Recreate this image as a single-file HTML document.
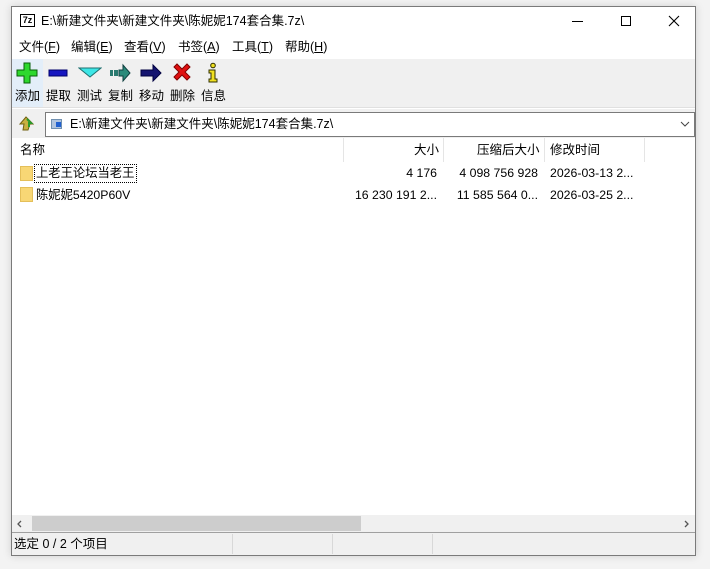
<!DOCTYPE html>
<html><head><meta charset="utf-8"><style>
*{margin:0;padding:0;box-sizing:border-box}
body{width:710px;height:569px;background:#f3f3f3;font-family:"Liberation Sans","Noto Sans CJK SC",sans-serif;font-size:12.5px;line-height:15px;color:#000;position:relative;overflow:hidden}
.win{position:absolute;left:11px;top:6px;width:685px;height:550px;background:#fff;border:1px solid #7a7a7a;box-shadow:0 0 8px rgba(0,0,0,.15)}
.a{position:absolute;white-space:nowrap}
.tb{position:absolute;left:0;top:52px;width:683px;height:49px;background:#f0f0f0;border-bottom:1px solid #e0e0e0}
.btn{position:absolute;top:0;width:31px;height:48px;text-align:center}
.btn svg{position:absolute;left:4px;top:3px}
.btn span{position:absolute;left:0;right:0;top:30px;font-size:12.5px}
.hdr{position:absolute;top:131px;height:24px;left:0;width:683px;background:#fff}
.sep{position:absolute;top:0;width:1px;height:24px;background:#e5e5e5}
.n{font-size:12.3px}
</style></head><body>
<div class="win">
 <div class="a" style="left:8px;top:7px;width:15px;height:13px;border:1px solid #000;font-size:9px;font-weight:bold;line-height:11px;text-align:center;background:#fff">7z</div>
 <div class="a" style="left:29px;top:7px">E:\新建文件夹\新建文件夹\陈妮妮174套合集.7z\</div>
 <div class="a" style="left:560px;top:14px;width:11px;height:1px;background:#000"></div>
 <div class="a" style="left:609px;top:9px;width:10px;height:10px;border:1px solid #000"></div>
 <svg class="a" style="left:656px;top:8px" width="12" height="12"><path d="M1 1L11 11M11 1L1 11" stroke="#000" stroke-width="1.1"/></svg>
 <div class="a" style="left:7px;top:33px">文件(<u>F</u>)</div>
 <div class="a" style="left:59px;top:33px">编辑(<u>E</u>)</div>
 <div class="a" style="left:112px;top:33px">查看(<u>V</u>)</div>
 <div class="a" style="left:166px;top:33px">书签(<u>A</u>)</div>
 <div class="a" style="left:220px;top:33px">工具(<u>T</u>)</div>
 <div class="a" style="left:273px;top:33px">帮助(<u>H</u>)</div>
 <div class="tb">
  <div class="btn" style="left:0;background:#e3eef9">
   <svg width="22" height="22"><path d="M8 1h6v7h7v6h-7v7H8v-7H1V8h7z" fill="#2ed82e" stroke="#0a600a" stroke-width="1"/></svg><span>添加</span></div>
  <div class="btn" style="left:31px">
   <svg width="22" height="22"><rect x="2" y="8" width="18" height="6" fill="#1616c0" stroke="#00006a"/></svg><span>提取</span></div>
  <div class="btn" style="left:62px">
   <svg width="24" height="22"><path d="M1 6h22l-11 9z" fill="#3de6e6" stroke="#207070"/></svg><span>测试</span></div>
  <div class="btn" style="left:93px">
   <svg width="22" height="22"><rect x="1" y="8" width="3" height="6" fill="#2a7a70"/><rect x="5" y="8" width="4" height="6" fill="#2a7a70"/><path d="M10 8h4V3l7 8-7 8v-5h-4z" fill="#2a8a7a" stroke="#104040"/></svg><span>复制</span></div>
  <div class="btn" style="left:124px">
   <svg width="22" height="22"><path d="M1 8h12V3l8 8-8 8v-5H1z" fill="#141470" stroke="#000040"/></svg><span>移动</span></div>
  <div class="btn" style="left:155px">
   <svg width="22" height="22"><path d="M3 5l3-3 5 5 5-5 3 3-5 5 5 5-3 3-5-5-5 5-3-3 5-5z" fill="#e01010" stroke="#800000"/></svg><span>删除</span></div>
  <div class="btn" style="left:186px">
   <svg width="22" height="22"><circle cx="11" cy="3.5" r="2.3" fill="#f0e020" stroke="#303000"/><path d="M7 8h6v9h2v3H7v-3h2v-6H7z" fill="#f0e020" stroke="#303000"/></svg><span>信息</span></div>
 </div>
 <div class="a" style="left:0;top:102px;width:683px;height:29px;background:#f0f0f0"></div>
 <svg class="a" style="left:6px;top:108px" width="16" height="16"><path d="M2 9h4l-1 6h5l2-6h3L8 2z" fill="#c8b040" stroke="#706010"/><path d="M9 4l4 4h-2v4" fill="none" stroke="#2a9a2a" stroke-width="2"/></svg>
 <div class="a" style="left:33px;top:105px;width:650px;height:25px;background:#fff;border:1px solid #7a7a7a"></div>
 <div class="a" style="left:39px;top:112px;width:11px;height:10px;background:#b0c4de;border:1px solid #7090b0"><div style="position:absolute;left:4px;top:2px;width:5px;height:5px;background:#2060d0"></div></div>
 <div class="a" style="left:58px;top:110px">E:\新建文件夹\新建文件夹\陈妮妮174套合集.7z\</div>
 <svg class="a" style="left:668px;top:113px" width="10" height="8"><path d="M1 2l4 4 4-4" fill="none" stroke="#444"/></svg>
 <div class="hdr">
  <div class="a" style="left:8px;top:5px">名称</div>
  <div class="sep" style="left:331px"></div>
  <div class="a" style="left:402px;top:5px">大小</div>
  <div class="sep" style="left:431px"></div>
  <div class="a" style="left:465px;top:5px">压缩后大小</div>
  <div class="sep" style="left:532px"></div>
  <div class="a" style="left:538px;top:5px">修改时间</div>
  <div class="sep" style="left:632px"></div>
 </div>
 <div class="a" style="left:8px;top:159px;width:13px;height:15px;background:#f8d775;border:1px solid #e4bf5a"></div>
 <div class="a" style="left:22px;top:157px;width:103px;height:19px;border:1px dotted #000"></div>
 <div class="a n" style="left:24px;top:159px">上老王论坛当老王</div>
 <div class="a" style="left:8px;top:180px;width:13px;height:15px;background:#f8d775;border:1px solid #e4bf5a"></div>
 <div class="a n" style="left:24px;top:181px">陈妮妮5420P60V</div>
 <div class="a n" style="right:258px;top:159px">4 176</div>
 <div class="a n" style="right:157px;top:159px">4 098 756 928</div>
 <div class="a n" style="left:538px;top:159px">2026-03-13 2...</div>
 <div class="a n" style="right:258px;top:181px">16 230 191 2...</div>
 <div class="a n" style="right:157px;top:181px">11 585 564 0...</div>
 <div class="a n" style="left:538px;top:181px">2026-03-25 2...</div>
 <div class="a" style="left:0;top:508px;width:683px;height:17px;background:#f0f0f0"></div>
 <div class="a" style="left:20px;top:509px;width:329px;height:15px;background:#cdcdcd"></div>
 <svg class="a" style="left:4px;top:512px" width="8" height="10"><path d="M5 2L2 5l3 3" fill="none" stroke="#555" stroke-width="1.3"/></svg>
 <svg class="a" style="left:670px;top:512px" width="8" height="10"><path d="M3 2l3 3-3 3" fill="none" stroke="#555" stroke-width="1.3"/></svg>
 <div class="a" style="left:0;top:525px;width:683px;height:23px;background:#f0f0f0;border-top:1px solid #a0a0a0"></div>
 <div class="a" style="left:220px;top:527px;width:1px;height:20px;background:#d8d8d8"></div>
 <div class="a" style="left:320px;top:527px;width:1px;height:20px;background:#d8d8d8"></div>
 <div class="a" style="left:420px;top:527px;width:1px;height:20px;background:#d8d8d8"></div>
 <div class="a" style="left:2px;top:530px">选定 0 / 2 个项目</div>
</div>
</body></html>
